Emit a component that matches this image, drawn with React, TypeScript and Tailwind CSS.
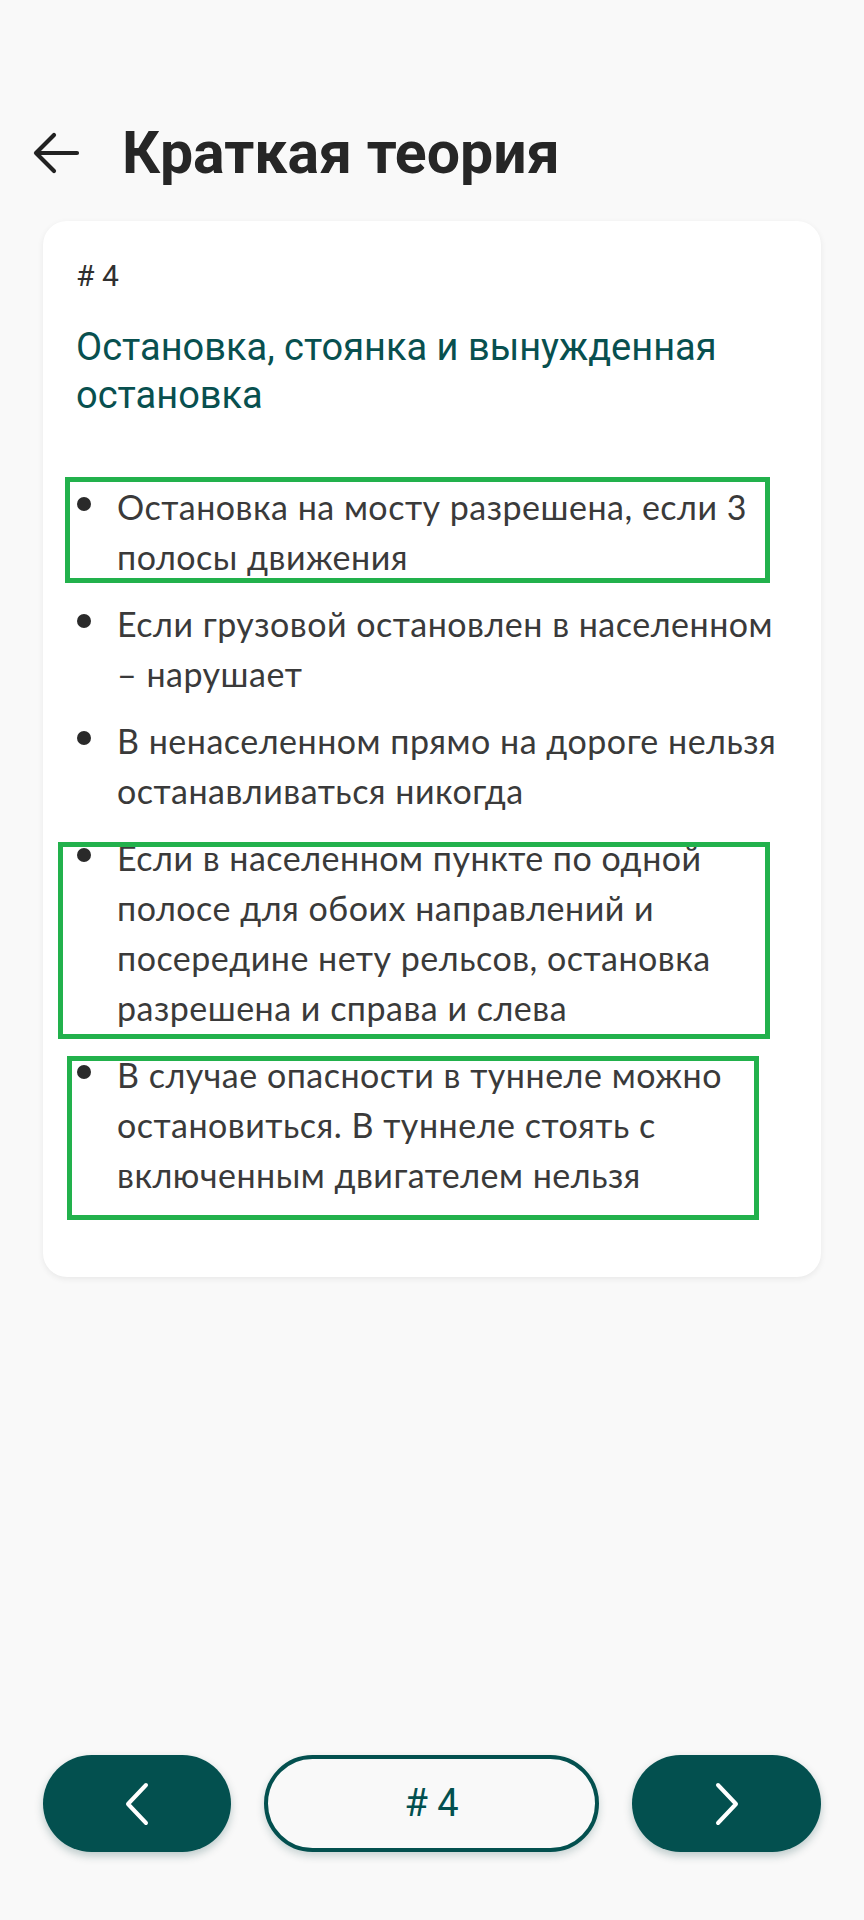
import React from "react";

const items: { text: string; box?: { left: number; top: number; width: number; height: number } }[] = [
  {
    text: "Остановка на мосту разрешена, если 3 полосы движения",
    box: { left: -11, top: -5, width: 705, height: 106 },
  },
  { text: "Если грузовой остановлен в населенном – нарушает" },
  { text: "В ненаселенном прямо на дороге нельзя останавливаться никогда" },
  {
    text: "Если в населенном пункте по одной полосе для обоих направлений и посередине нету рельсов, остановка разрешена и справа и слева",
    box: { left: -18, top: 9, width: 712, height: 197 },
  },
  {
    text: "В случае опасности в туннеле можно остановиться. В туннеле стоять с включенным двигателем нельзя",
    box: { left: -9, top: 6, width: 692, height: 164 },
  },
];

export default function App() {
  return (
    <div
      className="min-h-[1920px] w-[864px] bg-[#f9f9f9] flex flex-col"
      style={{ fontFamily: "Roboto, 'Noto Sans', sans-serif" }}
    >
      {/* Header */}
      <div className="flex items-center h-[80px] mt-[113px] pl-[30px]">
        <svg width="52" height="44" viewBox="0 0 52 44" className="shrink-0">
          <path
            d="M6 22 H47 M24 4 L6 22 L24 40"
            fill="none"
            stroke="#222222"
            strokeWidth="4.2"
            strokeLinecap="round"
            strokeLinejoin="round"
          />
        </svg>
        <h1 className="ml-[40px] text-[59px] leading-[80px] font-bold text-[#262626]">
          Краткая теория
        </h1>
      </div>

      {/* Card */}
      <div className="mx-[43px] mt-[28px] bg-white rounded-[24px] shadow-[0_2px_6px_rgba(0,0,0,0.07)] pl-[33px] pr-[30px] pt-[37px] pb-[77px]">
        <div className="text-[30px] leading-[36px] text-[#303030]">#&nbsp;4</div>
        <h2 className="mt-[29px] text-[38px] leading-[48px] text-[#08504f]">
          Остановка, стоянка и вынужденная остановка
        </h2>
        <ul className="mt-[63px] flex flex-col gap-[17px]">
          {items.map((it, i) => (
            <li key={i} className="relative flex">
              <span className="mt-[15px] w-[14px] h-[14px] rounded-full bg-[#2a2a2a] shrink-0 ml-[1px]" />
              <span
                className="ml-[26px] text-[34px] leading-[50px] text-[#3a3a3a] tracking-[0.5px]"
                style={{ fontFamily: "Lato, 'Open Sans', sans-serif" }}
              >
                {it.text}
              </span>
              {it.box && (
                <div
                  className="absolute border-[5px] border-[#22b14c] pointer-events-none"
                  style={{ left: it.box.left, top: it.box.top, width: it.box.width, height: it.box.height }}
                />
              )}
            </li>
          ))}
        </ul>
      </div>

      {/* Bottom nav */}
      <div className="mt-auto mb-[68px] flex items-center px-[43px] gap-[33px]">
        <button className="w-[188px] h-[97px] rounded-full bg-[#03504f] flex items-center justify-center shadow-[0_4px_8px_rgba(0,60,60,0.25)]">
          <svg width="26" height="44" viewBox="0 0 26 44">
            <path d="M22 3 L4 22 L22 41" fill="none" stroke="#ffffff" strokeWidth="4" strokeLinecap="round" strokeLinejoin="round" />
          </svg>
        </button>
        <button className="w-[335px] h-[97px] rounded-full border-[4px] border-[#03504f] bg-[#f9f9f9] flex items-center justify-center text-[38px] text-[#03504f] shadow-[0_4px_8px_rgba(0,60,60,0.2)]">
          #&nbsp;4
        </button>
        <button className="w-[189px] h-[97px] rounded-full bg-[#03504f] flex items-center justify-center shadow-[0_4px_8px_rgba(0,60,60,0.25)]">
          <svg width="26" height="44" viewBox="0 0 26 44">
            <path d="M4 3 L22 22 L4 41" fill="none" stroke="#ffffff" strokeWidth="4" strokeLinecap="round" strokeLinejoin="round" />
          </svg>
        </button>
      </div>
    </div>
  );
}
